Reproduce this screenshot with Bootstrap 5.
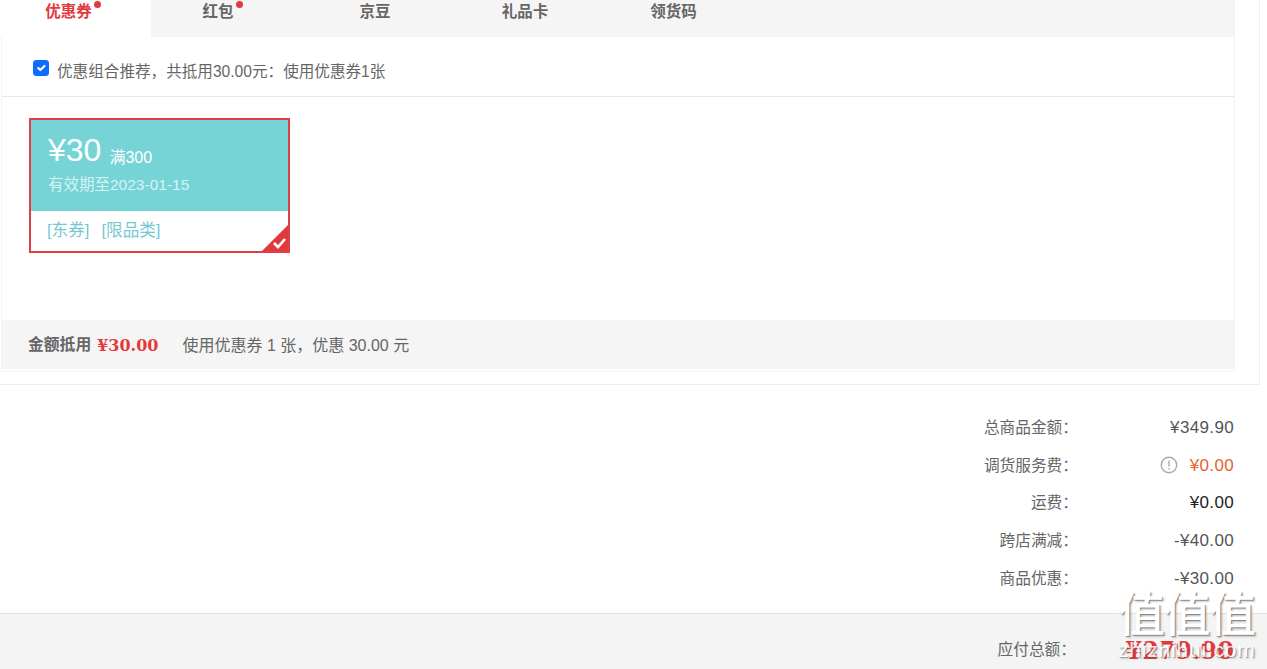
<!DOCTYPE html>
<html lang="zh">
<head>
<meta charset="utf-8">
<title>结算</title>
<link rel="stylesheet" href="https://cdn.jsdelivr.net/npm/bootstrap@5.3.0/dist/css/bootstrap.min.css">
<style>
html,body{height:669px;overflow:hidden;background:#fff}
body{font-family:"Liberation Sans","Noto Sans CJK SC",sans-serif;font-size:14px;color:#666;position:relative;line-height:1.2}
.shell{width:1260px;height:385px;border-right:1px solid #f0f0f0;border-bottom:1px solid #eee}
.inner{width:1234px;height:372px;margin-left:1px;border-left:1px solid #f4f4f4;border-right:1px solid #f4f4f4;border-bottom:1px solid #f4f4f4}
.tabbar{height:37px;background:#f5f5f5}
.tabitem{font-weight:700;font-size:15.5px;color:#666;height:37px;text-align:center;position:relative;line-height:24px}
.tabitem span{position:relative}
.t1{width:150px;background:#fff;color:#e4393c;margin-left:-1px;padding-right:15px}
.t2{width:136px;padding-right:2px}
.t3{width:176px}
.t4{width:123px;padding-left:1px}
.t5{width:172px;padding-left:3px}
.dotmark{position:absolute;top:-2px;right:-9px;width:7px;height:7px;border-radius:50%;background:#e4393c}
.recrow{height:60px;border-bottom:1px solid #e8e8e8;padding-left:31px;font-size:15.6px}
.recrow .form-check-input{width:16px;height:16px;margin:23px 8px 0 0;border-radius:3px}
.rectext{margin-top:26px}
.couponarea{height:223px;padding:21px 0 0 27px}
.coupon{width:261px;height:135px;border:2px solid #dc3f45;position:relative;overflow:hidden}
.coupontop{height:91px;background:#76d4d7;color:#fff;padding:11px 0 0 17px}
.camount{font-size:32px;line-height:38px}
.cmin{font-size:16px;margin-left:8px;position:relative;top:2px}
.cdate{font-size:15.5px;color:#d7f2f3;line-height:19px;margin-top:6px}
.cfoot{color:#76c8d4;font-size:16.6px;padding:10px 0 0 16px}
.cfoot span{margin-right:12px}
.corner{position:absolute;right:-1px;bottom:-1px;width:28px;height:28px}
.summary{height:49px;background:#f5f5f5;padding:2px 0 0 26px;font-size:16px}
.summary b{color:#666;font-size:15.8px}
.summary .sum{font-family:"DejaVu Serif","Noto Sans CJK SC",serif;font-weight:700;font-size:16px;color:#e4393c;margin:0 24px 0 6px}
.tot{padding-top:32px}
.totrow{height:37.7px;width:1234px}
.totlab{width:1078px;text-align:right;font-size:15.7px;padding-top:2px}
.totval{flex:1;text-align:right;font-size:17px;color:#555;letter-spacing:.35px;padding-top:1px}
.infoicon{margin-right:4px}
.orange{color:#e4622a}
.blackv{color:#222}
.payband{position:absolute;left:0;top:613px;width:1267px;height:56px;background:#f4f4f4;border-top:1px solid #e2e2e2}
.payrow{width:1234px;height:56px;padding-top:26px}
.paylab{width:1076px;text-align:right;font-size:15.7px;padding-top:1px}
.payval{flex:1;text-align:right;font-family:"DejaVu Serif","Noto Sans CJK SC",serif;font-weight:700;font-size:24px;color:#e4393c;line-height:22px;white-space:nowrap}
.wm{position:absolute;left:1118px;top:584px;color:#fff;text-shadow:1px 1px 1px rgba(80,80,80,.6),2px 2px 2px rgba(120,120,120,.35);pointer-events:none}
.wmcn{font-family:"Noto Sans CJK SC",sans-serif;font-size:47px;font-weight:500;line-height:54px;letter-spacing:-1.5px;white-space:nowrap}
.wmen{font-family:"Liberation Sans",sans-serif;font-size:21px;line-height:24px;letter-spacing:.8px;white-space:nowrap;opacity:.85}
</style>
</head>
<body>
<div class="shell">
 <div class="inner">
  <div class="tabbar d-flex">
   <div class="tabitem t1"><span>优惠券<i class="dotmark"></i></span></div>
   <div class="tabitem t2"><span>红包<i class="dotmark"></i></span></div>
   <div class="tabitem t3"><span>京豆</span></div>
   <div class="tabitem t4"><span>礼品卡</span></div>
   <div class="tabitem t5"><span>领货码</span></div>
  </div>
  <div class="recrow d-flex">
   <input class="form-check-input" type="checkbox" checked aria-label="优惠组合推荐">
   <span class="rectext">优惠组合推荐，共抵用30.00元：使用优惠券1张</span>
  </div>
  <div class="couponarea">
   <div class="coupon">
    <div class="coupontop">
     <div><span class="camount">¥30</span><span class="cmin">满300</span></div>
     <div class="cdate">有效期至2023-01-15</div>
    </div>
    <div class="cfoot"><span>[东券]</span><span>[限品类]</span></div>
    <svg class="corner" viewBox="0 0 28 28" aria-hidden="true"><polygon points="28,0 28,28 0,28" fill="#e4393c"/><path d="M13 19l4 4 7-8" fill="none" stroke="#fff" stroke-width="2.6"/></svg>
   </div>
  </div>
  <div class="summary d-flex align-items-center">
   <b>金额抵用</b><span class="sum">¥30.00</span><span>使用优惠券 1 张，优惠 30.00 元</span>
  </div>
 </div>
</div>
<div class="tot">
 <div class="totrow d-flex"><div class="totlab">总商品金额：</div><div class="totval">¥349.90</div></div>
 <div class="totrow d-flex"><div class="totlab">调货服务费：</div><div class="totval d-flex justify-content-end align-items-start gap-2">
  <svg class="infoicon" width="18" height="18" viewBox="0 0 18 18" aria-hidden="true"><circle cx="9" cy="9" r="7.7" fill="none" stroke="#aaa" stroke-width="1.4"/><path d="M9 4.5v6M9 12v1.6" stroke="#aaa" stroke-width="1.4"/></svg>
  <span class="orange">¥0.00</span></div></div>
 <div class="totrow d-flex"><div class="totlab">运费：</div><div class="totval blackv">¥0.00</div></div>
 <div class="totrow d-flex"><div class="totlab">跨店满减：</div><div class="totval">-¥40.00</div></div>
 <div class="totrow d-flex"><div class="totlab">商品优惠：</div><div class="totval">-¥30.00</div></div>
</div>
<div class="payband">
 <div class="payrow d-flex"><div class="paylab">应付总额：</div><div class="payval">¥279.90</div></div>
</div>
<div class="wm">
 <div class="wmcn">值值值</div>
 <div class="wmen">zhizhihui.com</div>
</div>
</body>
</html>
